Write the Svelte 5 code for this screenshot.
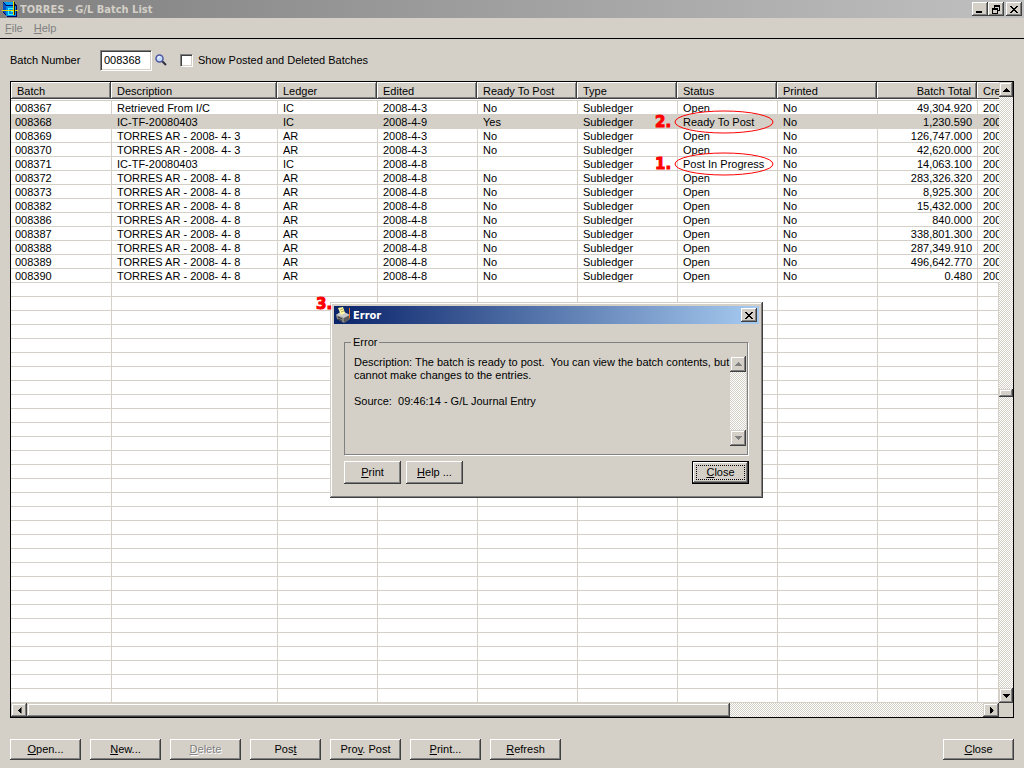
<script lang="ts">
  type Batch = {
    batch: string;
    description: string;
    ledger: string;
    edited: string;
    ready: string;
    status: string;
    total: string;
    mark?: string;
  };

  const columns = [
    { key: "batch", label: "Batch" },
    { key: "description", label: "Description" },
    { key: "ledger", label: "Ledger" },
    { key: "edited", label: "Edited" },
    { key: "ready", label: "Ready To Post" },
    { key: "type", label: "Type" },
    { key: "status", label: "Status" },
    { key: "printed", label: "Printed" },
    { key: "total", label: "Batch Total" },
    { key: "created", label: "Created" },
  ];

  const batches: Batch[] = [
    { batch: "008367", description: "Retrieved From I/C", ledger: "IC", edited: "2008-4-3", ready: "No", status: "Open", total: "49,304.920" },
    { batch: "008368", description: "IC-TF-20080403", ledger: "IC", edited: "2008-4-9", ready: "Yes", status: "Ready To Post", total: "1,230.590", mark: "2." },
    { batch: "008369", description: "TORRES AR - 2008- 4- 3", ledger: "AR", edited: "2008-4-3", ready: "No", status: "Open", total: "126,747.000" },
    { batch: "008370", description: "TORRES AR - 2008- 4- 3", ledger: "AR", edited: "2008-4-3", ready: "No", status: "Open", total: "42,620.000" },
    { batch: "008371", description: "IC-TF-20080403", ledger: "IC", edited: "2008-4-8", ready: "", status: "Post In Progress", total: "14,063.100", mark: "1." },
    { batch: "008372", description: "TORRES AR - 2008- 4- 8", ledger: "AR", edited: "2008-4-8", ready: "No", status: "Open", total: "283,326.320" },
    { batch: "008373", description: "TORRES AR - 2008- 4- 8", ledger: "AR", edited: "2008-4-8", ready: "No", status: "Open", total: "8,925.300" },
    { batch: "008382", description: "TORRES AR - 2008- 4- 8", ledger: "AR", edited: "2008-4-8", ready: "No", status: "Open", total: "15,432.000" },
    { batch: "008386", description: "TORRES AR - 2008- 4- 8", ledger: "AR", edited: "2008-4-8", ready: "No", status: "Open", total: "840.000" },
    { batch: "008387", description: "TORRES AR - 2008- 4- 8", ledger: "AR", edited: "2008-4-8", ready: "No", status: "Open", total: "338,801.300" },
    { batch: "008388", description: "TORRES AR - 2008- 4- 8", ledger: "AR", edited: "2008-4-8", ready: "No", status: "Open", total: "287,349.910" },
    { batch: "008389", description: "TORRES AR - 2008- 4- 8", ledger: "AR", edited: "2008-4-8", ready: "No", status: "Open", total: "496,642.770" },
    { batch: "008390", description: "TORRES AR - 2008- 4- 8", ledger: "AR", edited: "2008-4-8", ready: "No", status: "Open", total: "0.480" },
  ];

  const emptyRows = Array.from({ length: 30 });

  // label split around the underlined access key
  const actions = [
    { pre: "", key: "O", post: "pen..." },
    { pre: "", key: "N", post: "ew..." },
    { pre: "", key: "D", post: "elete", disabled: true },
    { pre: "Pos", key: "t", post: "" },
    { pre: "Pro", key: "v", post: ". Post" },
    { pre: "", key: "P", post: "rint..." },
    { pre: "", key: "R", post: "efresh" },
  ];

  let batchNumber = $state("008368");
  let showPosted = $state(false);
  let selected = $state("008368");
  let dialogOpen = $state(true);
</script>

{#snippet arrow(direction: string)}
  <svg class="arrow {direction}" width="7" height="4" viewBox="0 0 7 4" shape-rendering="crispEdges">
    <path d="M3 0h1v1h1v1h1v1h1v1H0V3h1V2h1V1h1z" fill="currentColor" />
  </svg>
{/snippet}

{#snippet cross()}
  <svg width="8" height="7" viewBox="0 0 8 7" shape-rendering="crispEdges">
    <path d="M0 0h2v1h1v1h2V1h1V0h2v1H7v1H6v1H5v1h1v1h1v1h1v1H6V6H5V5H3v1H2v1H0V6h1V5h1V4h1V3H2V2H1V1H0z" fill="#000" />
  </svg>
{/snippet}

<div class="window">
  <header class="titlebar">
    <svg class="app-icon" width="16" height="16" viewBox="0 0 16 16" shape-rendering="crispEdges">
      <path d="M1 1h10l4 4v11H5l-4-4z" fill="#000060" />
      <path d="M1 1h9l3 3H4z" fill="#00a0f0" />
      <path d="M1 2l3 3v9l-3-3z" fill="#0050c0" />
      <path d="M4 5h10v10H4z" fill="#0090e8" />
      <path d="M6 7h6v1H7v5h4v-2H9v-1h3v4H6z" fill="#30ffff" />
      <path d="M0 9h16v1H0zM11 0h1v14h-1z" fill="#e8d800" />
      <path d="M12 1h1v13h-1z" fill="#202000" />
    </svg>
    <h1>TORRES - G/L Batch List</h1>
    <div class="caption-buttons">
      <button class="caption" aria-label="Minimize">
        <svg width="8" height="8" viewBox="0 0 8 8" shape-rendering="crispEdges"><path d="M0 6h6v2H0z" /></svg>
      </button>
      <button class="caption" aria-label="Restore">
        <svg width="8" height="9" viewBox="0 0 8 9" shape-rendering="crispEdges">
          <path d="M2 0h6v6H6V5h1V2H3v1H2z" />
          <path d="M0 3h6v6H0zM1 5v3h4V5z" fill-rule="evenodd" />
        </svg>
      </button>
      <button class="caption spaced" aria-label="Close window">{@render cross()}</button>
    </div>
  </header>

  <nav class="menu">
    <button disabled><u>F</u>ile</button>
    <button disabled><u>H</u>elp</button>
  </nav>

  <div class="filters">
    <label class="batch-label" for="batch-number">Batch Number</label>
    <input id="batch-number" class="batch-number" type="text" bind:value={batchNumber} />
    <button class="finder" aria-label="Find batch">
      <svg width="12" height="12" viewBox="0 0 12 12">
        <path d="M7 7l4 4" stroke="#303040" stroke-width="2" />
        <circle cx="4.5" cy="4.5" r="3.5" fill="#c4dcff" stroke="#5058a0" stroke-width="1.5" />
        <path d="M3 4.5A2 2 0 0 1 5 2.5" fill="none" stroke="#fff" />
      </svg>
    </button>
    <input id="show-posted" class="check" type="checkbox" bind:checked={showPosted} />
    <label for="show-posted">Show Posted and Deleted Batches</label>
  </div>

  <main class="grid">
    <div class="grid-body">
      <div class="sheet">
        <table>
          <colgroup>
            {#each columns as column}
              <col class="col-{column.key}" />
            {/each}
          </colgroup>
          <thead>
            <tr>
              {#each columns as column}
                <th class={column.key} scope="col"><span>{column.label}</span></th>
              {/each}
            </tr>
          </thead>
          <tbody>
            {#each batches as row}
              <tr class:selected={row.batch === selected} onclick={() => (selected = row.batch)}>
                <td>{row.batch}</td>
                <td>{row.description}</td>
                <td>{row.ledger}</td>
                <td>{row.edited}</td>
                <td>{row.ready}</td>
                <td>Subledger</td>
                <td class="status">
                  {row.status}
                  {#if row.mark}
                    <svg class="ring" width="100" height="24" viewBox="0 0 100 24">
                      <ellipse cx="50" cy="12" rx="49" ry="11" fill="none" stroke="#f00" />
                    </svg>
                    <b class="mark">{row.mark}</b>
                  {/if}
                </td>
                <td>No</td>
                <td class="total">{row.total}</td>
                <td class="created">{row.edited}</td>
              </tr>
            {/each}
            {#each emptyRows as _}
              <tr>
                {#each columns as _column}
                  <td></td>
                {/each}
              </tr>
            {/each}
          </tbody>
        </table>
      </div>
      <div class="scroll vertical">
        <button aria-label="Scroll up">{@render arrow("up")}</button>
        <div class="track"></div>
        <div class="thumb"></div>
        <div class="track"></div>
        <button aria-label="Scroll down">{@render arrow("down")}</button>
      </div>
    </div>
    <div class="grid-foot">
      <div class="scroll horizontal">
        <button aria-label="Scroll left">{@render arrow("left")}</button>
        <div class="thumb"></div>
        <div class="track"></div>
        <button aria-label="Scroll right">{@render arrow("right")}</button>
      </div>
      <div class="corner"></div>
    </div>
  </main>

  <footer class="actions">
    {#each actions as action}
      <button class="push" disabled={action.disabled}>{action.pre}<u>{action.key}</u>{action.post}</button>
    {/each}
    <button class="push last"><u>C</u>lose</button>
  </footer>

  {#if dialogOpen}
    <div class="dialog" role="dialog" aria-labelledby="dialog-title">
      <b class="mark">3.</b>
      <div class="dialog-title">
        <svg width="16" height="16" viewBox="0 0 16 16">
          <path d="M0 8l6-4 8 4v4l-6 4-7-4z" fill="#858585" />
          <path d="M0 8l6-4 8 4-6 3z" fill="#c8c8c8" />
          <path d="M2 1l5-1 2 6-4 2z" fill="#fff9a0" />
          <path d="M4 3l3-1M5 5l3-1" stroke="#b0a860" />
          <path d="M8 11v5l6-4V8z" fill="#5c5c5c" />
          <path d="M2 10l4 2M2 12l4 2" stroke="#333" />
          <path d="M13.5 1v10" stroke="#f07020" />
        </svg>
        <h2 id="dialog-title">Error</h2>
        <button class="caption" aria-label="Close dialog" onclick={() => (dialogOpen = false)}>{@render cross()}</button>
      </div>
      <fieldset>
        <legend>Error</legend>
        <div class="message">
          <p>Description: The batch is ready to post.&nbsp; You can view the batch contents, but<br />cannot make changes to the entries.<br /><br />Source:&nbsp; 09:46:14 - G/L Journal Entry</p>
          <div class="scroll vertical idle">
            <button disabled aria-label="Scroll message up">{@render arrow("up")}</button>
            <div class="track"></div>
            <button disabled aria-label="Scroll message down">{@render arrow("down")}</button>
          </div>
        </div>
      </fieldset>
      <div class="dialog-actions">
        <button class="push"><u>P</u>rint</button>
        <button class="push"><u>H</u>elp ...</button>
        <button class="push last default" onclick={() => (dialogOpen = false)}><u>C</u>lose</button>
      </div>
    </div>
  {/if}
</div>

<style>
  :global(body) {
    background: #d4d0c8;
  }

  .window,
  .window * {
    box-sizing: border-box;
  }

  .window {
    --face: #d4d0c8;
    --shadow: #808080;
    --dark: #404040;
    position: relative;
    display: flex;
    flex-direction: column;
    min-height: 100vh;
    background: var(--face);
    color: #000;
    font-family: "Liberation Sans", Arial, sans-serif;
    font-size: 11px;
    line-height: 13px;
  }

  button,
  input {
    margin: 0;
    padding: 0;
    border: none;
    border-radius: 0;
    background: none;
    color: inherit;
    font: inherit;
  }

  svg {
    display: block;
    flex: none;
  }

  h1,
  h2 {
    margin: 0;
    font-family: "DejaVu Sans Condensed", "DejaVu Sans", Tahoma, sans-serif;
    font-size: 11px;
    font-weight: 700;
  }

  /* Title bar */
  .titlebar {
    display: flex;
    align-items: center;
    height: 18px;
    padding: 0 2px;
    background: linear-gradient(to right, #808080, #c0c0c0);
    color: var(--face);
  }

  h1 {
    padding-left: 2px;
  }

  .caption-buttons {
    display: flex;
    margin-left: auto;
  }

  .caption {
    display: flex;
    align-items: center;
    justify-content: center;
    width: 16px;
    height: 14px;
    background: var(--face);
    box-shadow:
      inset -1px -1px var(--dark),
      inset 1px 1px #fff,
      inset -2px -2px var(--shadow);
  }

  .spaced {
    margin-left: 2px;
  }

  /* Menu */
  .menu {
    display: flex;
    gap: 11px;
    height: 21px;
    padding: 0 5px;
    border-bottom: 1px solid #000;
    color: var(--shadow);
  }

  /* Filters */
  .filters {
    display: flex;
    align-items: center;
    height: 42px;
    padding: 0 10px;
  }

  .batch-label {
    width: 90px;
  }

  .batch-number {
    width: 52px;
    height: 21px;
    padding: 0 3px;
    border: 1px solid;
    border-color: var(--shadow) #fff #fff var(--shadow);
    background: #fff;
    box-shadow:
      inset 1px 1px var(--dark),
      inset -1px -1px var(--face);
    outline: none;
  }

  .finder {
    margin: 0 13px 0 3px;
  }

  .check {
    appearance: none;
    width: 13px;
    height: 13px;
    margin-right: 5px;
    border: 1px solid;
    border-color: var(--shadow) #fff #fff var(--shadow);
    background: #fff;
    box-shadow:
      inset 1px 1px var(--dark),
      inset -1px -1px var(--face);
  }

  .check:checked {
    background: #000;
  }

  /* Grid */
  .grid {
    margin: 0 10px;
    border: 1px solid #000;
    background: #fff;
  }

  .grid-body,
  .grid-foot {
    display: flex;
  }

  .sheet {
    flex: 1;
    min-width: 0;
    overflow: hidden;
  }

  table {
    width: 100%;
    border-spacing: 0;
    table-layout: fixed;
    cursor: default;
  }

  col {
    width: 100px;
  }

  .col-batch {
    width: 101px;
  }

  .col-description {
    width: 166px;
  }

  .col-created {
    width: auto;
  }

  th {
    height: 19px;
    padding: 0 0 1px;
    border-bottom: 1px solid var(--face);
    font-weight: 400;
    text-align: left;
  }

  th span {
    display: block;
    height: 17px;
    margin: 0 1px 0 -1px;
    padding: 3px 6px 0;
    overflow: hidden;
    background: var(--face);
    border-bottom: 1px solid var(--dark);
    box-shadow:
      inset -1px 0 var(--dark),
      inset 1px 1px #fff,
      inset -2px -1px var(--shadow);
  }

  th.batch span {
    margin-left: 0;
  }

  th.created span {
    margin-right: 0;
    padding-right: 0;
    box-shadow: inset 1px 1px #fff;
  }

  td {
    height: 14px;
    padding: 1px 5px 0;
    border-right: 1px solid var(--face);
    border-bottom: 1px solid var(--face);
    line-height: 12px;
    white-space: nowrap;
  }

  td:first-child {
    padding-left: 4px;
  }

  .total {
    text-align: right;
  }

  td.created {
    padding-right: 0;
    border-right: none;
    overflow: hidden;
  }

  .selected td {
    background: var(--face);
  }

  .status {
    position: relative;
  }

  .ring {
    position: absolute;
    z-index: 1;
    top: -5px;
    left: -4px;
  }

  .mark {
    position: absolute;
    color: #f00;
    font-family: "DejaVu Sans", Verdana, sans-serif;
    font-size: 15px;
    line-height: 16px;
    -webkit-text-stroke: 1px #f00;
  }

  .status .mark {
    top: -1px;
    left: -23px;
  }

  /* Scroll bars */
  .scroll {
    display: flex;
    background: repeating-conic-gradient(#fff 0% 25%, var(--face) 0% 50%) 0 0 / 2px 2px;
  }

  .scroll button {
    display: flex;
    flex: none;
    align-items: center;
    justify-content: center;
    width: 15px;
    height: 15px;
  }

  .scroll button,
  .thumb {
    background: var(--face);
    box-shadow:
      inset -1px -1px var(--dark),
      inset 1px 1px var(--face),
      inset -2px -2px var(--shadow),
      inset 2px 2px #fff;
  }

  .vertical {
    flex-direction: column;
    width: 14px;
  }

  .vertical button {
    width: 100%;
  }

  .track {
    flex: 1;
  }

  .vertical .thumb {
    height: 8px;
  }

  .horizontal {
    flex: 1;
    height: 14px;
  }

  .horizontal button {
    width: 16px;
    height: 14px;
  }

  .horizontal .thumb {
    flex: 703;
  }

  .horizontal .track {
    flex: 253;
  }

  .down {
    transform: rotate(180deg);
  }

  .left {
    transform: rotate(-90deg);
  }

  .right {
    transform: rotate(90deg);
  }

  .corner {
    width: 14px;
    background: var(--face);
  }

  /* Push buttons */
  .actions {
    display: flex;
    gap: 9px;
    padding: 21px 10px 8px;
  }

  .push {
    width: 71px;
    height: 21px;
    background: var(--face);
    box-shadow:
      inset -1px -1px var(--dark),
      inset 1px 1px #fff,
      inset -2px -2px var(--shadow);
  }

  .push:disabled {
    color: var(--shadow);
    text-shadow: 1px 1px #fff;
  }

  .last {
    margin-left: auto;
  }

  /* Error dialog */
  .dialog {
    position: absolute;
    z-index: 2;
    top: 302px;
    left: 330px;
    width: 433px;
    padding: 4px;
    background: var(--face);
    box-shadow:
      inset -1px -1px var(--dark),
      inset 1px 1px var(--face),
      inset -2px -2px var(--shadow),
      inset 2px 2px #fff;
  }

  .dialog > .mark {
    top: -6px;
    left: -14px;
  }

  .dialog-title {
    display: flex;
    align-items: center;
    height: 18px;
    padding: 0 2px;
    background: linear-gradient(to right, #0a246a, #a6caf0);
    color: #fff;
  }

  h2 {
    flex: 1;
    padding-left: 1px;
  }

  fieldset {
    min-width: 0;
    margin: 12px 11px 6px 10px;
    padding: 0 1px 8px 9px;
    border: 1px solid var(--shadow);
    box-shadow: 1px 1px #fff;
  }

  legend {
    margin-left: -3px;
    padding: 0 2px;
  }

  .message {
    display: flex;
    height: 97px;
    padding-top: 7px;
  }

  p {
    flex: 1;
    min-width: 0;
    margin: 0;
    white-space: nowrap;
  }

  .idle {
    width: 16px;
    color: var(--shadow);
  }

  .idle button {
    height: 16px;
  }

  .dialog-actions {
    display: flex;
    gap: 5px;
    padding: 0 10px;
    margin-bottom: 10px;
  }

  .dialog-actions .push {
    width: 57px;
    height: 23px;
  }

  .dialog-actions .default {
    border: 1px solid #000;
    outline: 1px dotted #000;
    outline-offset: -5px;
  }
</style>
